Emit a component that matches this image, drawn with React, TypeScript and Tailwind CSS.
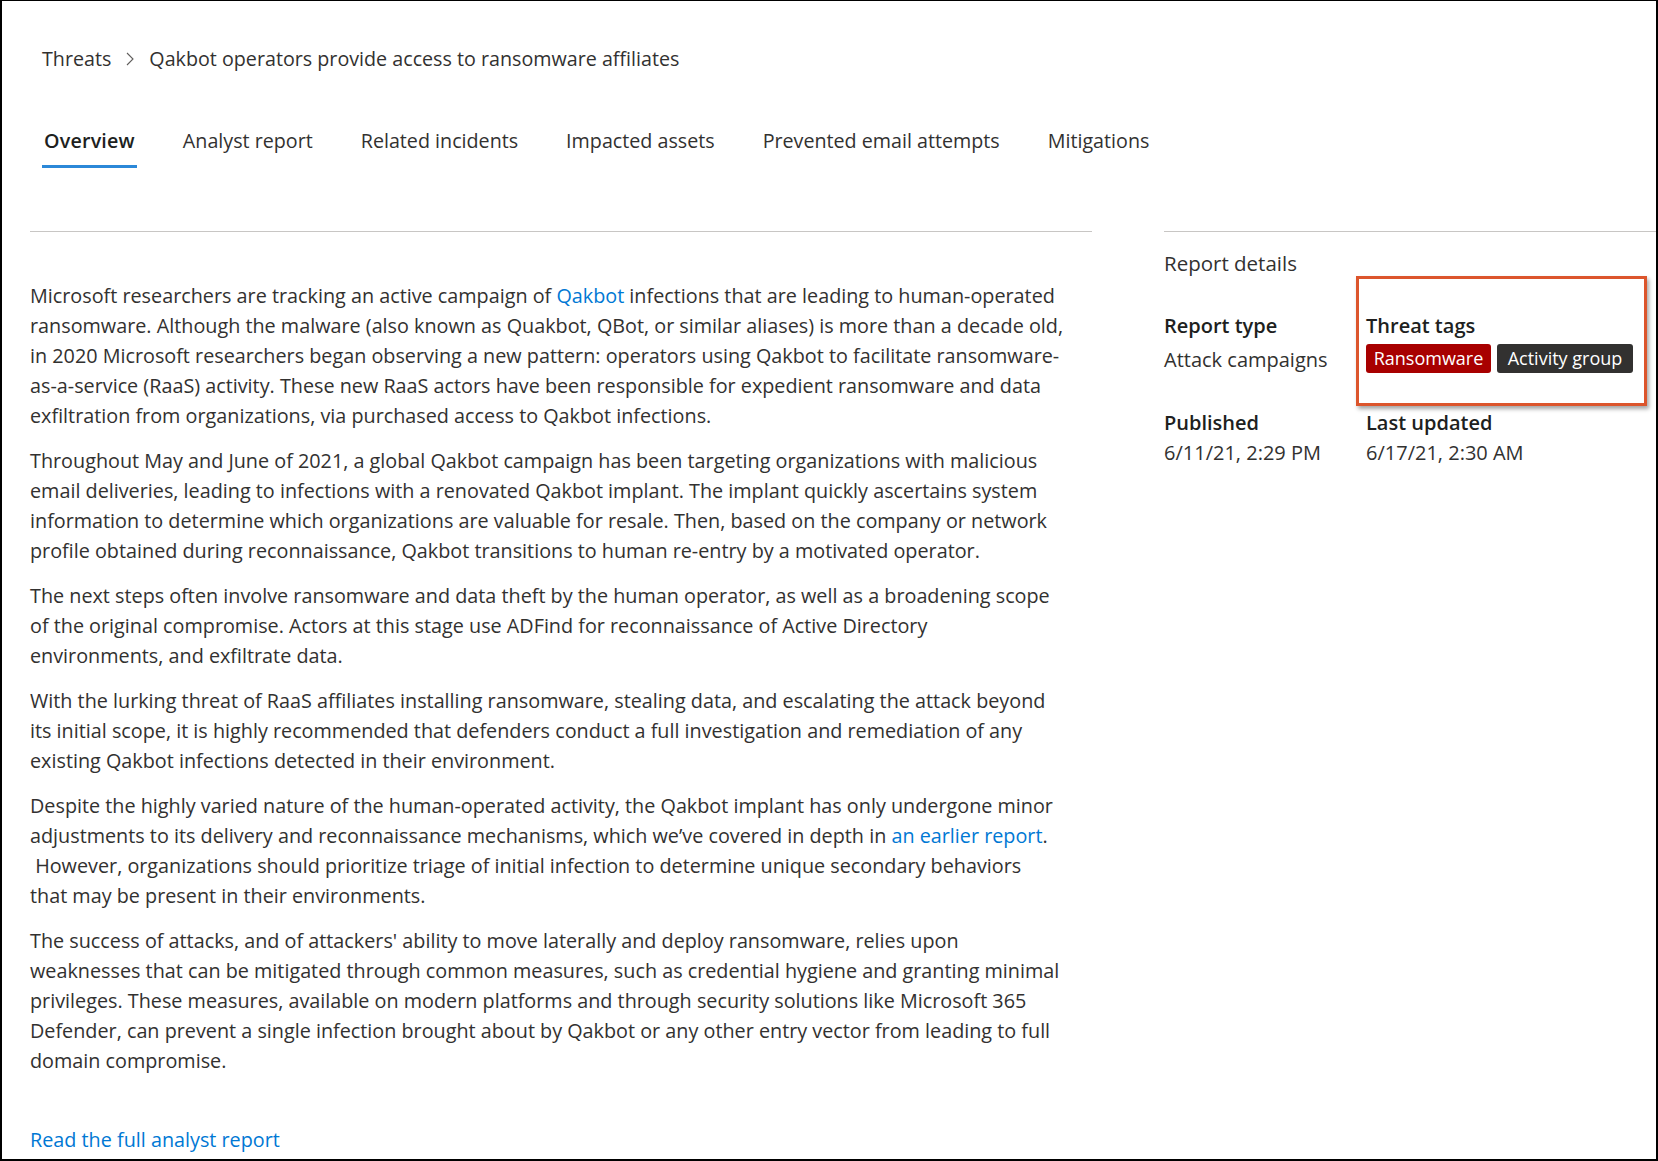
import React from "react";

const P: { lines: React.ReactNode[] }[] = [
  {
    lines: [
      <>
        Microsoft researchers are tracking an active campaign of{" "}
        <span className="text-[#0078d4]">Qakbot</span> infections that are leading to human-operated
      </>,
      "ransomware. Although the malware (also known as Quakbot, QBot, or similar aliases) is more than a decade old,",
      "in 2020 Microsoft researchers began observing a new pattern: operators using Qakbot to facilitate ransomware-",
      "as-a-service (RaaS) activity. These new RaaS actors have been responsible for expedient ransomware and data",
      "exfiltration from organizations, via purchased access to Qakbot infections.",
    ],
  },
  {
    lines: [
      "Throughout May and June of 2021, a global Qakbot campaign has been targeting organizations with malicious",
      "email deliveries, leading to infections with a renovated Qakbot implant. The implant quickly ascertains system",
      "information to determine which organizations are valuable for resale. Then, based on the company or network",
      "profile obtained during reconnaissance, Qakbot transitions to human re-entry by a motivated operator.",
    ],
  },
  {
    lines: [
      "The next steps often involve ransomware and data theft by the human operator, as well as a broadening scope",
      "of the original compromise. Actors at this stage use ADFind for reconnaissance of Active Directory",
      "environments, and exfiltrate data.",
    ],
  },
  {
    lines: [
      "With the lurking threat of RaaS affiliates installing ransomware, stealing data, and escalating the attack beyond",
      "its initial scope, it is highly recommended that defenders conduct a full investigation and remediation of any",
      "existing Qakbot infections detected in their environment.",
    ],
  },
  {
    lines: [
      "Despite the highly varied nature of the human-operated activity, the Qakbot implant has only undergone minor",
      <>
        adjustments to its delivery and reconnaissance mechanisms, which we’ve covered in depth in{" "}
        <span className="text-[#0078d4]">an earlier report</span>.
      </>,
      "\u00a0However, organizations should prioritize triage of initial infection to determine unique secondary behaviors",
      "that may be present in their environments.",
    ],
  },
  {
    lines: [
      "The success of attacks, and of attackers' ability to move laterally and deploy ransomware, relies upon",
      "weaknesses that can be mitigated through common measures, such as credential hygiene and granting minimal",
      "privileges. These measures, available on modern platforms and through security solutions like Microsoft 365",
      "Defender, can prevent a single infection brought about by Qakbot or any other entry vector from leading to full",
      "domain compromise.",
    ],
  },
];

const tabs = [
  "Overview",
  "Analyst report",
  "Related incidents",
  "Impacted assets",
  "Prevented email attempts",
  "Mitigations",
];

export default function App() {
  return (
    <div
      className="w-[1658px] h-[1161px] box-border overflow-hidden bg-white border-2 border-t border-black text-[#323130]"
      style={{ fontFamily: '"Open Sans", "Noto Sans", sans-serif' }}
    >
      {/* Breadcrumb */}
      <div className="pt-[44px] pl-[40px] flex items-center h-[72px] box-border text-[19.7px] leading-[28px]">
        <span>Threats</span>
        <svg width="10" height="16" viewBox="0 0 10 16" className="ml-[14px] mr-[14px]">
          <polyline points="2,2 8,8 2,14" fill="none" stroke="#605e5c" strokeWidth="1.1" />
        </svg>
        <span>Qakbot operators provide access to ransomware affiliates</span>
      </div>

      {/* Tabs */}
      <div className="mt-[54px] pl-[40px] flex gap-[44px] text-[19.7px] leading-[28px]">
        {tabs.map((t, i) => (
          <div
            key={t}
            className={
              i === 0
                ? "pb-[10px] px-[2px] border-b-[3px] border-[#2b88d8] font-semibold text-[#201f1e] tracking-[0.2px]"
                : "pb-[10px] px-[2px] border-b-[3px] border-transparent"
            }
          >
            {t}
          </div>
        ))}
      </div>

      {/* Main */}
      <div className="mt-[63px] flex">
        {/* Left column */}
        <div className="ml-[28px] w-[1062px]">
          <div className="h-px bg-[#c8c6c4]" />
          <div className="pt-[49px] text-[19.8px] leading-[30px]">
            {P.map((p, i) => (
              <div key={i} className="mb-[15px]">
                {p.lines.map((l, j) => (
                  <div key={j} className="whitespace-nowrap">
                    {l}
                  </div>
                ))}
              </div>
            ))}
            <div className="mt-[49px] text-[#0078d4]">Read the full analyst report</div>
          </div>
        </div>

        {/* Right column */}
        <div className="ml-[72px] flex-1">
          <div className="h-px bg-[#c8c6c4]" />
          <div className="pt-[17px] text-[20px] leading-[28px]">
            <div className="text-[20.5px]">Report details</div>
            <div className="mt-[35px] flex">
              <div className="w-[202px]">
                <div className="font-semibold text-[#201f1e]">Report type</div>
                <div className="mt-[6px]">Attack campaigns</div>
              </div>
              <div className="relative">
                <div className="font-semibold text-[#201f1e]">Threat tags</div>
                <div className="mt-[4px] flex gap-[6px] text-[18px] leading-[29px] text-white">
                  <span className="bg-[#a80000] rounded-[3px] w-[125px] text-center">Ransomware</span>
                  <span className="bg-[#323130] rounded-[3px] w-[136px] text-center">Activity group</span>
                </div>
                <div className="absolute left-[-10px] top-[-36px] w-[291px] h-[130px] border-[3px] border-[#dc552c] shadow-[2px_3px_4px_rgba(0,0,0,0.35)] pointer-events-none" />
              </div>
            </div>
            <div className="mt-[35px] flex">
              <div className="w-[202px]">
                <div className="font-semibold text-[#201f1e]">Published</div>
                <div className="mt-[2px]">6/11/21, 2:29 PM</div>
              </div>
              <div>
                <div className="font-semibold text-[#201f1e]">Last updated</div>
                <div className="mt-[2px]">6/17/21, 2:30 AM</div>
              </div>
            </div>
          </div>
        </div>
      </div>
    </div>
  );
}
